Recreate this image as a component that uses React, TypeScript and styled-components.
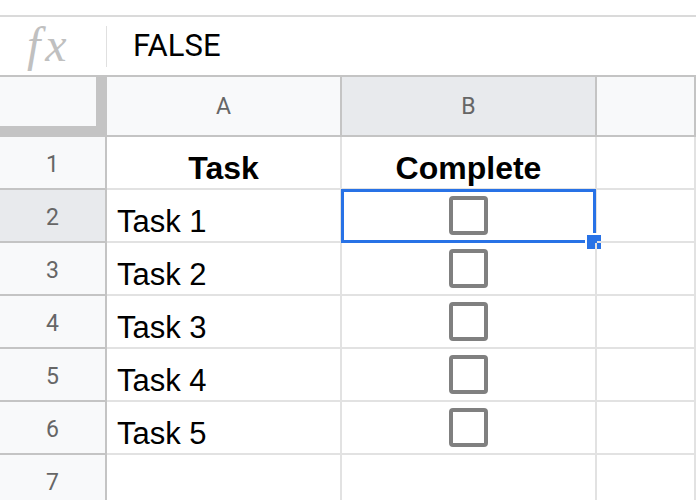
import styled, { createGlobalStyle } from "styled-components";

const GlobalStyle = createGlobalStyle`
  html, body {
    margin: 0;
    background: #fff;
    overflow: hidden;
    font-family: "Liberation Sans", Arial, sans-serif;
  }
  * {
    box-sizing: border-box;
  }
`;

const lineHeader = "#c4c4c4";
const lineBody = "#e2e2e2";
const selectBlue = "#2872e6";

const TopStrip = styled.div`
  height: 17px;
  border-bottom: 2px solid #dadada;
`;

const FormulaBar = styled.div`
  display: flex;
  align-items: center;
  height: 60px;
  border-bottom: 2px solid ${lineHeader};
`;

const FxLabel = styled.div`
  width: 106px;
  padding-left: 27px;
  font-family: "Liberation Serif", "DejaVu Serif", serif;
  font-style: italic;
  font-size: 48px;
  letter-spacing: 5px;
  color: #c0c0c0;
  line-height: 1;
  padding-bottom: 2px;
`;

const Divider = styled.div`
  width: 1px;
  height: 41px;
  background: #e0e0e0;
`;

const FormulaValue = styled.div`
  padding-left: 26px;
  font-family: Roboto, "Liberation Sans", sans-serif;
  font-size: 31px;
  color: #000;
  padding-bottom: 2px;
`;

const Sheet = styled.div`
  display: grid;
  grid-template-columns: 107px 235px 255px 1fr;
  grid-template-rows: 60px repeat(7, 53px);
`;

const Corner = styled.div`
  background: #f8f9fa;
  border-right: 11px solid ${lineHeader};
  border-bottom: 11px solid ${lineHeader};
`;

const HeaderCell = styled.div<{ $active?: boolean }>`
  display: flex;
  align-items: center;
  justify-content: center;
  background: ${(p) => (p.$active ? "#e8eaed" : "#f8f9fa")};
  border-right: 2px solid ${lineHeader};
  border-bottom: 2px solid ${lineHeader};
  font-family: Roboto, "Liberation Sans", sans-serif;
  font-size: 23px;
  color: #666;
`;

const RowHeader = styled(HeaderCell)`
  padding-top: 3px;
`;

const Cell = styled.div<{ $center?: boolean; $bold?: boolean }>`
  position: relative;
  display: flex;
  align-items: flex-end;
  justify-content: ${(p) => (p.$center ? "center" : "flex-start")};
  padding: 0 10px 4px;
  border-right: 2px solid ${lineBody};
  border-bottom: 2px solid ${lineBody};
  font-size: ${(p) => (p.$bold ? "32px" : "31px")};
  font-weight: ${(p) => (p.$bold ? 700 : 400)};
  line-height: ${(p) => (p.$bold ? "32px" : "31px")};
  color: #000;
`;

const CheckCell = styled(Cell)`
  align-items: center;
  padding: 0;
`;

const Checkbox = styled.div`
  width: 39px;
  height: 39px;
  border: 4px solid #808080;
  border-radius: 4px;
`;

const Selection = styled.div`
  position: absolute;
  top: -1px;
  left: -1px;
  right: -1px;
  bottom: -2px;
  border: 3px solid ${selectBlue};
  pointer-events: none;
`;

const Handle = styled.div`
  position: absolute;
  right: -10px;
  bottom: -11px;
  width: 18px;
  height: 18px;
  background: ${selectBlue};
  border: 2px solid #fff;
`;

const rows = [
  { n: 1, task: "Task", head: true },
  { n: 2, task: "Task 1" },
  { n: 3, task: "Task 2" },
  { n: 4, task: "Task 3" },
  { n: 5, task: "Task 4" },
  { n: 6, task: "Task 5" },
  { n: 7, task: "", empty: true },
];

export default function App() {
  return (
    <>
      <GlobalStyle />
      <TopStrip />
      <FormulaBar>
        <FxLabel>fx</FxLabel>
        <Divider />
        <FormulaValue>FALSE</FormulaValue>
      </FormulaBar>
      <Sheet>
        <Corner />
        <HeaderCell>A</HeaderCell>
        <HeaderCell $active>B</HeaderCell>
        <HeaderCell />
        {rows.map((r) => (
          <Row key={r.n} {...r} />
        ))}
      </Sheet>
    </>
  );
}

function Row({
  n,
  task,
  head,
  empty,
}: {
  n: number;
  task: string;
  head?: boolean;
  empty?: boolean;
}) {
  const selected = n === 2;
  return (
    <>
      <RowHeader $active={selected}>{n}</RowHeader>
      <Cell $center={head} $bold={head}>
        {task}
      </Cell>
      {head ? (
        <Cell $center $bold>
          Complete
        </Cell>
      ) : (
        <CheckCell $center>
          {!empty && <Checkbox />}
          {selected && (
            <Selection>
              <Handle />
            </Selection>
          )}
        </CheckCell>
      )}
      <Cell />
    </>
  );
}
